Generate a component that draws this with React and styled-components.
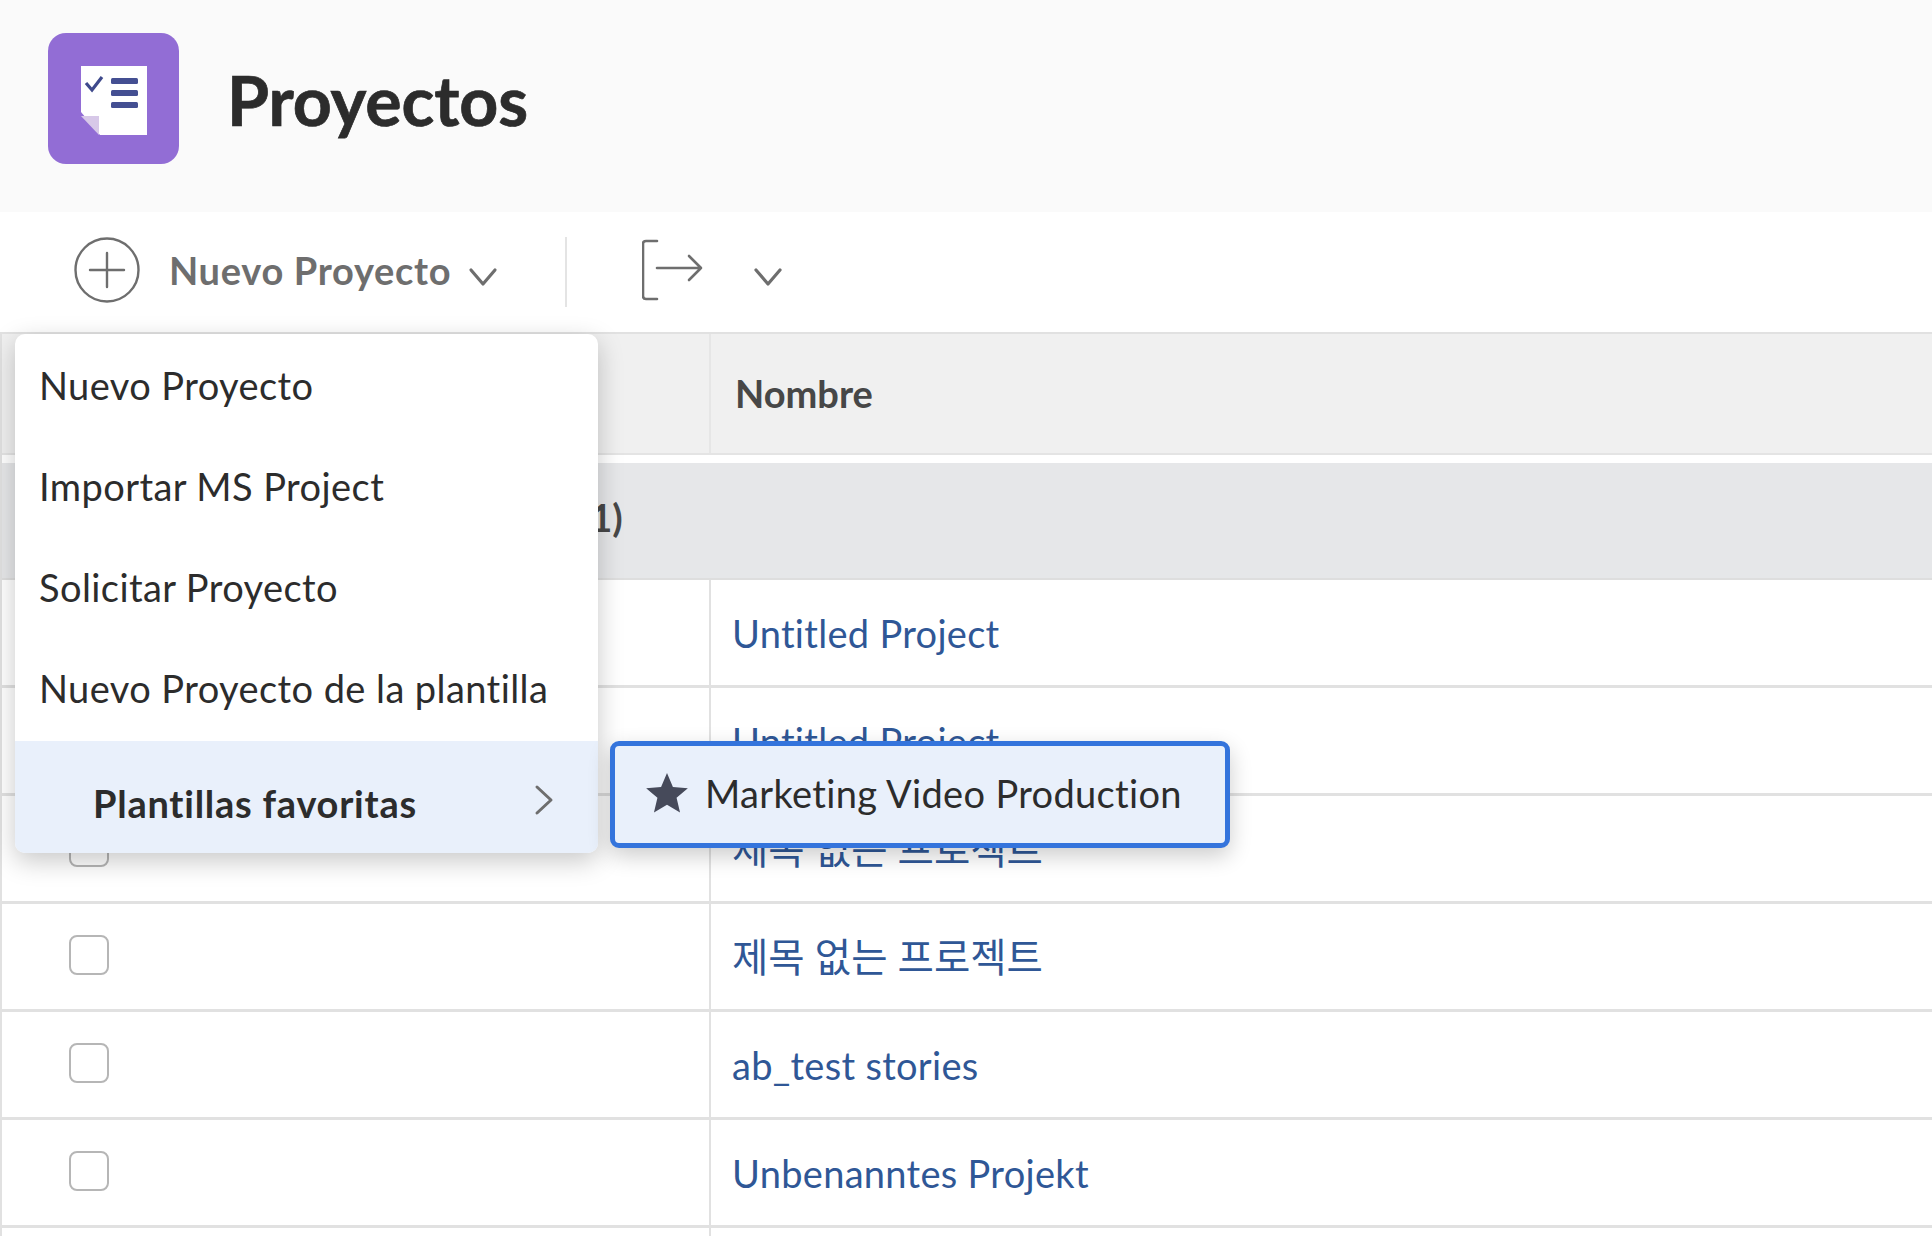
import React from "react";
import styled, { createGlobalStyle } from "styled-components";

const Global = createGlobalStyle`
  html, body { margin: 0; padding: 0; background: #fff; }
  body { font-family: "Lato", "Noto Sans CJK KR", sans-serif; overflow: hidden; }
`;
const Page = styled.div`
  position: relative;
  width: 1932px;
  height: 1236px;
  overflow: hidden;
  background: #fff;
`;
const Header = styled.header`
  height: 212px;
  background: #fafafa;
  display: flex;
  align-items: center;
  gap: 48px;
  padding: 0 0 16px 48px;
  box-sizing: border-box;
`;
const AppIcon = styled.div`
  width: 131px;
  height: 131px;
  border-radius: 18px;
  background: #926dd5;
  display: flex;
  align-items: center;
  justify-content: center;
  padding-top: 4px;
  box-sizing: border-box;
`;
const Title = styled.h1`
  margin: 2px 0 0;
  font-size: 68px;
  font-weight: 700;
  color: #2c2c2c;
  letter-spacing: -0.05px;
  -webkit-text-stroke: 0.7px #2c2c2c;
`;
const Toolbar = styled.div`
  height: 120px;
  display: flex;
  align-items: center;
  padding: 0 0 4px 74px;
  box-sizing: border-box;
  color: #6e6e6e;
`;
const ToolLabel = styled.span`
  font-size: 38px;
  font-weight: 700;
  letter-spacing: 0.7px;
  margin-left: 29px;
  color: #6e6e6e;
`;
const ToolChevron = styled.svg`
  width: 30px;
  height: 20px;
  margin-left: ${(p) => p.$gap}px;
  margin-top: 14px;
`;
const Divider = styled.div`
  width: 2px;
  height: 70px;
  margin: 4px 75px 0 67px;
  background: #e4e4e4;
`;
const Table = styled.div`
  border-top: 2px solid #e1e1e1;
  border-left: 2px solid #e1e1e1;
`;
const HeadRow = styled.div`
  display: grid;
  grid-template-columns: 707px 1fr;
  height: 119px;
  background: #f0f0f0;
  border-bottom: 2px solid #e4e4e4;
`;
const HeadCell = styled.div`
  display: flex;
  align-items: center;
  padding: 0 0 2px 24px;
  border-left: 2px solid #e6e6e6;
  font-size: 38px;
  font-weight: 700;
  color: #474747;
  grid-column: 2;
`;
const GroupRow = styled.div`
  margin-top: 8px;
  height: 117px;
  background: #e6e7e9;
  border-bottom: 2px solid #dedede;
  box-sizing: border-box;
  display: flex;
  align-items: center;
  padding: 0 0 7px 378px;
  font-size: 38px;
  font-weight: 700;
  color: #474747;
`;
const Row = styled.div`
  display: grid;
  grid-template-columns: 707px 1fr;
  height: 108px;
  box-sizing: border-box;
  border-bottom: 3px solid #e1e1e1;
`;
const CheckCell = styled.div`
  display: flex;
  align-items: center;
  padding: 0 0 4px 67px;
`;
const Checkbox = styled.span`
  width: 36px;
  height: 36px;
  border: 2px solid #b6b6b6;
  border-radius: 8px;
  background: #fff;
`;
const NameCell = styled.a`
  display: flex;
  align-items: center;
  padding: 0 0 ${(p) => (p.$cjk ? 4 : 0)}px 21px;
  border-left: 2px solid #e1e1e1;
  font-size: ${(p) => (p.$cjk ? 39.5 : 38)}px;
  letter-spacing: ${(p) => (p.$cjk ? 0 : 0.3)}px;
  color: #2f5796;
`;
const Menu = styled.div`
  position: absolute;
  left: 15px;
  top: 334px;
  width: 583px;
  height: 519px;
  border-radius: 10px;
  background: #fff;
  box-shadow: 0 8px 26px rgba(0, 0, 0, 0.22);
  display: flex;
  flex-direction: column;
  overflow: hidden;
  z-index: 2;
`;
const MenuItem = styled.div`
  height: 101px;
  display: flex;
  align-items: center;
  padding-left: 24px;
  font-size: 38px;
  letter-spacing: 0.42px;
  color: #2c2c2c;
`;
const MenuActive = styled.div`
  margin-top: auto;
  height: 112px;
  background: #e9f0fb;
  display: flex;
  align-items: center;
  justify-content: space-between;
  padding: 12px 44px 0 78px;
  box-sizing: border-box;
  font-size: 38px;
  font-weight: 700;
  letter-spacing: 0.75px;
  color: #2c2c2c;
`;
const MenuChevron = styled.svg`
  width: 20px;
  height: 32px;
  margin-top: -6px;
`;
const Submenu = styled.div`
  position: absolute;
  left: 610px;
  top: 741px;
  width: 620px;
  height: 107px;
  box-sizing: border-box;
  border: 5px solid #3474dc;
  border-radius: 9px;
  background: #e9f0fb;
  box-shadow: 0 8px 22px rgba(0, 0, 0, 0.2);
  display: flex;
  align-items: center;
  gap: 17px;
  padding: 0 0 3px 31px;
  font-size: 38px;
  letter-spacing: 0.33px;
  color: #2c2c2c;
  z-index: 3;
`;

const rows = [
  { name: "Untitled Project" },
  { name: "Untitled Project" },
  { name: "제목 없는 프로젝트", cjk: true },
  { name: "제목 없는 프로젝트", cjk: true },
  { name: "ab_test stories" },
  { name: "Unbenanntes Projekt" },
  { name: "" },
];

const Chev = ({ gap, color = "#6e6e6e" }) => (
  <ToolChevron $gap={gap} viewBox="0 0 30 20" fill="none">
    <path d="M3 3l12 14L27 3" stroke={color} strokeWidth="3.2" strokeLinecap="round" strokeLinejoin="round" />
  </ToolChevron>
);

export default function App() {
  return (
    <Page>
      <Global />
      <Header>
        <AppIcon>
          <svg width="66" height="69" viewBox="0 0 66 69">
            <path d="M0 0H66V69H19L0 46Z" fill="#fff" />
            <path d="M0 50H18V69Z" fill="#d7c8e8" />
            <path d="M5 17l6 7L21 11" stroke="#3f4a8c" strokeWidth="3.2" fill="none" />
            <rect x="30" y="12" width="27" height="6" rx="1.5" fill="#444f92" />
            <rect x="30" y="24" width="27" height="6" rx="1.5" fill="#444f92" />
            <rect x="30" y="36" width="27" height="6" rx="1.5" fill="#444f92" />
          </svg>
        </AppIcon>
        <Title>Proyectos</Title>
      </Header>
      <Toolbar>
        <svg width="66" height="66" viewBox="0 0 66 66" fill="none" stroke="#6e6e6e" strokeWidth="2.4">
          <circle cx="33" cy="33" r="31.5" />
          <path d="M33 16V50M16 33H50" strokeLinecap="round" />
        </svg>
        <ToolLabel>Nuevo Proyecto</ToolLabel>
        <Chev gap={17} />
        <Divider />
        <svg width="62" height="62" viewBox="0 0 62 62" fill="none" stroke="#6e6e6e" strokeWidth="2.6" strokeLinecap="round" strokeLinejoin="round">
          <path d="M15 2H4Q1 2 1 5V57Q1 60 4 60H15" />
          <path d="M15 29H59M47 17l12 12L47 41" />
        </svg>
        <Chev gap={49} />
      </Toolbar>
      <Table>
        <HeadRow>
          <HeadCell>Nombre</HeadCell>
        </HeadRow>
        <GroupRow>Proyectos (11)</GroupRow>
        {rows.map((row, i) => (
          <Row key={i}>
            <CheckCell><Checkbox /></CheckCell>
            <NameCell $cjk={row.cjk}>{row.name}</NameCell>
          </Row>
        ))}
      </Table>
      <Menu>
        <MenuItem>Nuevo Proyecto</MenuItem>
        <MenuItem>Importar MS Project</MenuItem>
        <MenuItem>Solicitar Proyecto</MenuItem>
        <MenuItem>Nuevo Proyecto de la plantilla</MenuItem>
        <MenuActive>
          Plantillas favoritas
          <MenuChevron viewBox="0 0 20 32" fill="none">
            <path d="M3 3l14 13L3 29" stroke="#6e6e6e" strokeWidth="3" strokeLinecap="round" strokeLinejoin="round" />
          </MenuChevron>
        </MenuActive>
      </Menu>
      <Submenu>
        <svg width="42" height="40" viewBox="0 0 24 23">
          <path d="M12 0l3.4 8 8.6.7-6.5 5.6 2 8.4L12 18.2 4.500 22.700l2-8.400L0 8.700 8.600 8z" fill="#464a5a" />
        </svg>
        Marketing Video Production
      </Submenu>
    </Page>
  );
}
